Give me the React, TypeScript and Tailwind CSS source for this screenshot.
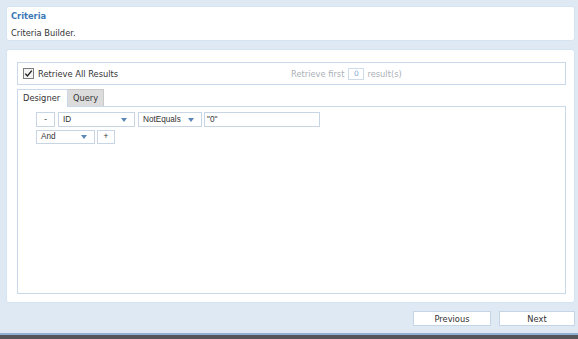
import React from 'react';

const Caret = () => (
  <svg width="6" height="4" viewBox="0 0 6 4" className="shrink-0">
    <path d="M0 0 L6 0 L3 4 Z" fill="#5a86b8" />
  </svg>
);

const Select = ({ label, w }: { label: string; w: string }) => (
  <div className={`${w} h-full border border-[#c7d5e4] bg-white flex items-center justify-between pl-[4px] pr-[7px]`}>
    <span>{label}</span>
    <Caret />
  </div>
);

const App = () => {
  return (
    <div className="w-[578px] h-[339px] bg-[#dfe9f3] flex flex-col font-['DejaVu_Sans',sans-serif] text-[8.3px] leading-[12px] text-[#333]">
      {/* Header */}
      <div className="mt-[6px] ml-[6px] mr-[3px] h-[35px] bg-white rounded-[3px] border border-[#d6e3f0] pl-[4px] pt-[3px] flex flex-col">
        <span className="font-bold text-[#3b78b6]">Criteria</span>
        <span className="mt-[5px]">Criteria Builder.</span>
      </div>

      {/* Main panel */}
      <div className="mt-[8px] ml-[6px] mr-[3px] h-[254px] bg-white rounded-[3px] border border-[#d6e3f0] pt-[12px] pl-[10px] pr-[8px] flex flex-col">
        {/* Retrieve options */}
        <div className="h-[23px] border border-[#c9d9ea] flex items-center pl-[5px]">
          <div className="w-[268px] shrink-0 flex items-center gap-[4px]">
            <svg width="11" height="11" viewBox="0 0 11 11">
              <rect x="0.5" y="0.5" width="10" height="10" fill="#f4f4f4" stroke="#7d7d7d" />
              <path d="M2.3 5.6 L4.4 8 L8.8 2.6" fill="none" stroke="#222" strokeWidth="1.4" />
            </svg>
            <span>Retrieve All Results</span>
          </div>
          <div className="flex items-center text-[#aab0b6]">
            <span>Retrieve first</span>
            <span className="ml-[4px] w-[16px] h-[12px] border border-[#cddbea] flex items-center justify-center text-[#86a9cf] text-[7.5px]">0</span>
            <span className="ml-[3px]">result(s)</span>
          </div>
        </div>

        {/* Tabs */}
        <div className="mt-[3px] flex items-end h-[18px]">
          <div className="w-[51px] h-[18px] bg-white border border-[#c9d9ea] border-b-0 pl-[5px] flex items-center relative z-10 -mb-px pb-px">
            Designer
          </div>
          <div className="w-[36px] h-[17px] bg-[#dcdcdc] border border-[#c9c9c9] border-b-0 border-l-0 flex items-center justify-center">
            Query
          </div>
        </div>

        {/* Designer content */}
        <div className="h-[188px] border border-[#c9d9ea] pt-[5px] pl-[18px] font-['Liberation_Sans',sans-serif] text-[8.2px] leading-[10px]">
          <div className="flex h-[15px]">
            <div className="w-[19px] h-full border border-[#c7d5e4] flex items-center justify-center">-</div>
            <div className="ml-[3px] h-full flex">
              <Select label="ID" w="w-[77px]" />
            </div>
            <div className="ml-[3px] h-full flex">
              <Select label="NotEquals" w="w-[64px]" />
            </div>
            <div className="ml-[2px] w-[116px] h-full border border-[#c7d5e4] flex items-center pl-[2px]">"0"</div>
          </div>
          <div className="mt-[3px] flex h-[14px]">
            <Select label="And" w="w-[59px]" />
            <div className="ml-[2px] w-[18px] h-full border border-[#c7d5e4] flex items-center justify-center">+</div>
          </div>
        </div>
      </div>

      {/* Buttons */}
      <div className="mt-[8px] flex justify-end pr-[3px] gap-[8px]">
        <button className="w-[78px] h-[15px] bg-white border border-[#c6d5e5] flex items-center justify-center">Previous</button>
        <button className="w-[76px] h-[15px] bg-white border border-[#c6d5e5] flex items-center justify-center">Next</button>
      </div>

      {/* Bottom strip */}
      <div className="mt-auto h-[6px] flex flex-col">
        <div className="h-[2px] bg-[#8fb2d4]" />
        <div className="flex-1 bg-[#545658]" />
      </div>
    </div>
  );
};

export default App;
